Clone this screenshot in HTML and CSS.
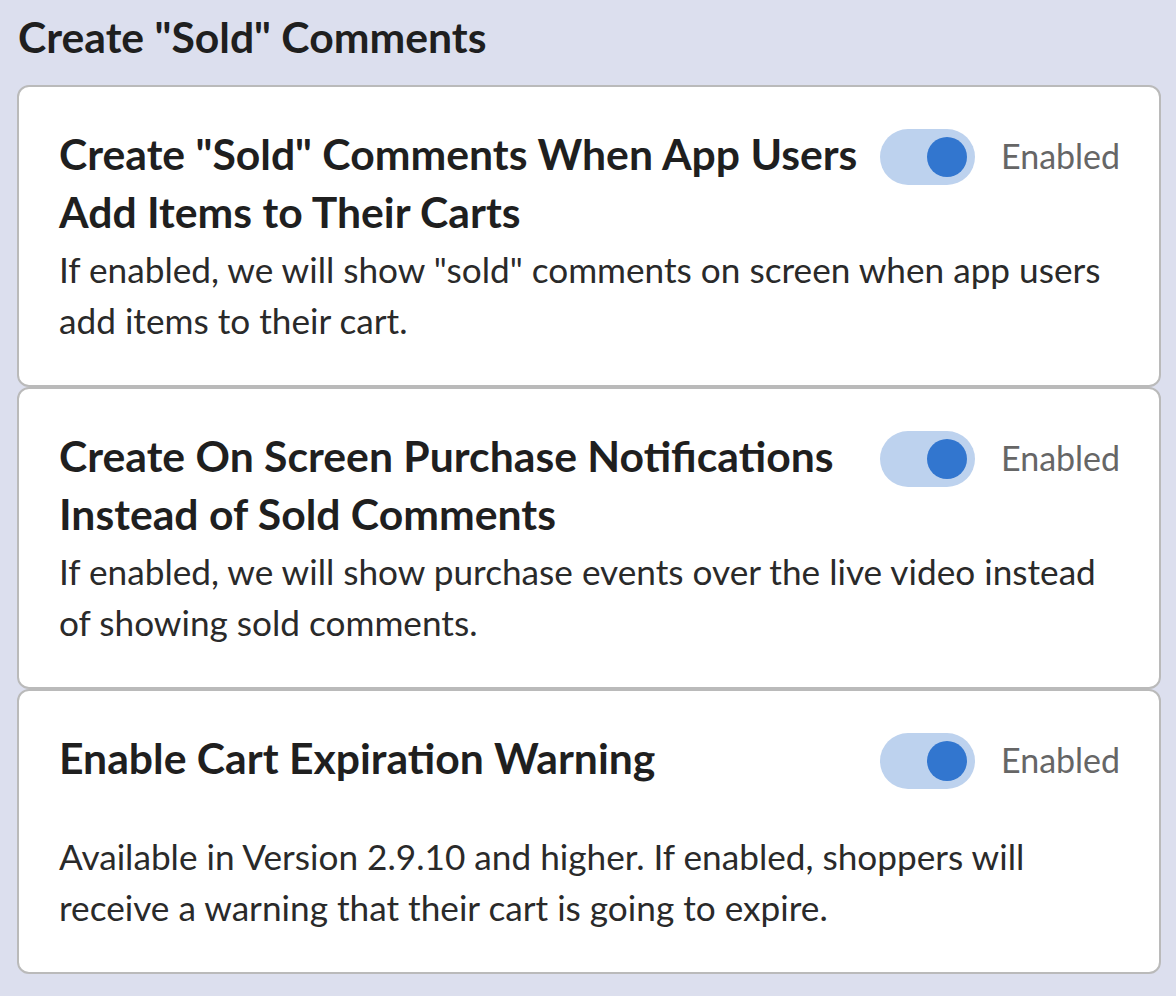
FILE: index.html
```html
<!DOCTYPE html>
<html lang="en">
<head>
<meta charset="utf-8">
<title>Create "Sold" Comments</title>
<link rel="stylesheet" href="styles.css">
</head>
<body>
<main class="page">
  <h1 class="page-title">Create "Sold" Comments</h1>
  <section class="card">
    <div class="card-head">
      <h2 class="card-title">Create "Sold" Comments When App Users Add Items to Their Carts</h2>
      <div class="switch-wrap">
        <span class="switch"><span class="switch-knob"></span></span>
        <span class="switch-label">Enabled</span>
      </div>
    </div>
    <p class="card-desc">If enabled, we will show "sold" comments on screen when app users add items to their cart.</p>
  </section>
  <section class="card">
    <div class="card-head">
      <h2 class="card-title">Create On Screen Purchase Notifications Instead of Sold Comments</h2>
      <div class="switch-wrap">
        <span class="switch"><span class="switch-knob"></span></span>
        <span class="switch-label">Enabled</span>
      </div>
    </div>
    <p class="card-desc">If enabled, we will show purchase events over the live video instead of showing sold comments.</p>
  </section>
  <section class="card">
    <div class="card-head">
      <h2 class="card-title">Enable Cart Expiration Warning</h2>
      <div class="switch-wrap">
        <span class="switch"><span class="switch-knob"></span></span>
        <span class="switch-label">Enabled</span>
      </div>
    </div>
    <p class="card-desc card-desc--spaced">Available in Version 2.9.10 and higher. If enabled, shoppers will receive a warning that their cart is going to expire.</p>
  </section>
</main>
</body>
</html>
```
FILE: styles.css
```css
* { box-sizing: border-box; }
html, body { margin: 0; padding: 0; }
body {
  background: #dcdfee;
  font-family: Lato, "Noto Sans", sans-serif;
  color: #222;
}
.page {
  padding: 8px 15px 21px 17px;
  display: flex;
  flex-direction: column;
}
.page-title {
  margin: 0 0 19px 1px;
  font-size: 42.7px;
  line-height: 58px;
  font-weight: 700;
  color: #1f1f1f;
}
.card {
  background: #fff;
  border: 2px solid #bababa;
  border-radius: 12px;
  padding: 38px 40px 39px 40px;
}
.card-head {
  display: flex;
  align-items: flex-start;
}
.card-title {
  flex: 1;
  margin: 0;
  font-size: 42.7px;
  line-height: 58px;
  font-weight: 700;
  color: #1f1f1f;
}
.switch-wrap {
  display: flex;
  align-items: center;
  margin-top: 4px;
  margin-left: 14px;
}
.switch {
  width: 95px;
  height: 56px;
  border-radius: 28px;
  background: #bdd2ee;
  display: flex;
  align-items: center;
  justify-content: flex-end;
  padding-right: 8px;
}
.switch-knob {
  width: 40px;
  height: 40px;
  border-radius: 50%;
  background: #3276cf;
}
.switch-label {
  width: 118px;
  margin-left: 26px;
  font-size: 34px;
  line-height: 50px;
  font-weight: 400;
  color: #666;
  white-space: nowrap;
  padding-bottom: 3px;
}
.card-desc {
  margin: 3px 0 0 0;
  font-size: 35.2px;
  line-height: 51px;
  color: #2a2a2a;
}
.card-desc--spaced {
  margin-top: 42px;
}
```
